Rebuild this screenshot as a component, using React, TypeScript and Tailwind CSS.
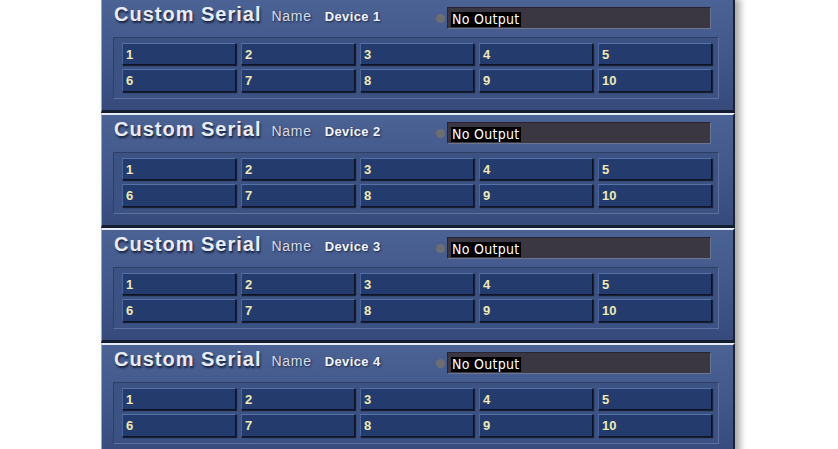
import React from "react";

const nums = [1, 2, 3, 4, 5, 6, 7, 8, 9, 10];

function Panel({ n }: { n: number }) {
  return (
    <div className="h-[115px] flex flex-col border-t-2 border-t-[#e6ecf6] border-b-[3px] border-b-[#141c30] border-l border-l-[#9aa6bc] border-r-2 border-r-[#1a2236] bg-gradient-to-b from-[#4b6294] via-[#42588a] to-[#364b7c]">
      <div className="pt-[7px] h-[29px] flex items-start">
        <div className="flex items-baseline h-[22px] pl-[12px] w-[334px] -mt-[3px]">
          <span
            className="text-[20px] font-bold tracking-[1px] text-[#e8ecf2] leading-[20px]"
            style={{ fontFamily: '"Liberation Sans", Arial, sans-serif', textShadow: "1px 2px 2px rgba(10,16,36,0.8)" }}
          >
            Custom Serial
          </span>
          <span
            className="ml-[10px] text-[14px] tracking-[0.7px] text-[#d8dce4] leading-[20px]"
            style={{ fontFamily: '"Liberation Sans", Arial, sans-serif', textShadow: "1px 1px 2px rgba(10,16,36,0.7)" }}
          >
            Name
          </span>
          <span
            className="ml-[13px] text-[13px] font-bold tracking-[0.4px] text-[#f2f4ff] leading-[20px]"
            style={{ fontFamily: '"Liberation Sans", Arial, sans-serif', textShadow: "1px 1px 2px rgba(10,16,36,0.7)" }}
          >
            Device {n}
          </span>
        </div>
        <div className="w-[9px] h-[9px] rounded-full bg-[#6e6e72] mt-[7px]" />
        <div className="ml-[2px] w-[264px] h-[22px] bg-[#3b3742] border border-t-[#262432] border-l-[#262432] border-r-[#6a7690] border-b-[#6a7690] flex items-start pl-[3px] pt-[4px]">
          <span
            className="bg-black text-white text-[14px] leading-[15px] h-[15px] px-[1px] tracking-[0.3px]"
            style={{ fontFamily: '"DejaVu Sans Condensed", "Liberation Sans", Arial, sans-serif' }}
          >
            No Output
          </span>
        </div>
      </div>
      <div className="mt-[8px] ml-[11px] w-[606px] h-[62px] border border-t-[#2e3f66] border-l-[#2e3f66] border-r-[#5d719c] border-b-[#5d719c] bg-[#3c5283] pl-[8px] pr-[6px] pt-[5px]">
        <div className="grid grid-cols-[repeat(5,114px)] gap-x-[5px] gap-y-[4px]">
          {nums.map((k) => (
            <div
              key={k}
              className={`${k <= 5 ? "h-[22px]" : "h-[23px]"} bg-[#243b6e] border border-t-[#5670a8] border-l-[#4a64a0] border-r-[#0e1426] border-b-[#0e1426] shadow-[1px_1px_1px_rgba(8,12,24,0.7)] flex items-center pl-[3px]`}
            >
              <span
                className="text-[13px] font-bold text-[#eeeab2] leading-none"
                style={{ fontFamily: '"Liberation Sans", Arial, sans-serif' }}
              >
                {k}
              </span>
            </div>
          ))}
        </div>
      </div>
    </div>
  );
}

export default function App() {
  return (
    <div className="w-[838px] h-[449px] bg-white overflow-hidden">
      <div className="ml-[101px] w-[634px] -mt-[2px] shadow-[5px_0_7px_rgba(0,0,0,0.35)]">
        {[1, 2, 3, 4].map((n) => (
          <Panel key={n} n={n} />
        ))}
      </div>
    </div>
  );
}
